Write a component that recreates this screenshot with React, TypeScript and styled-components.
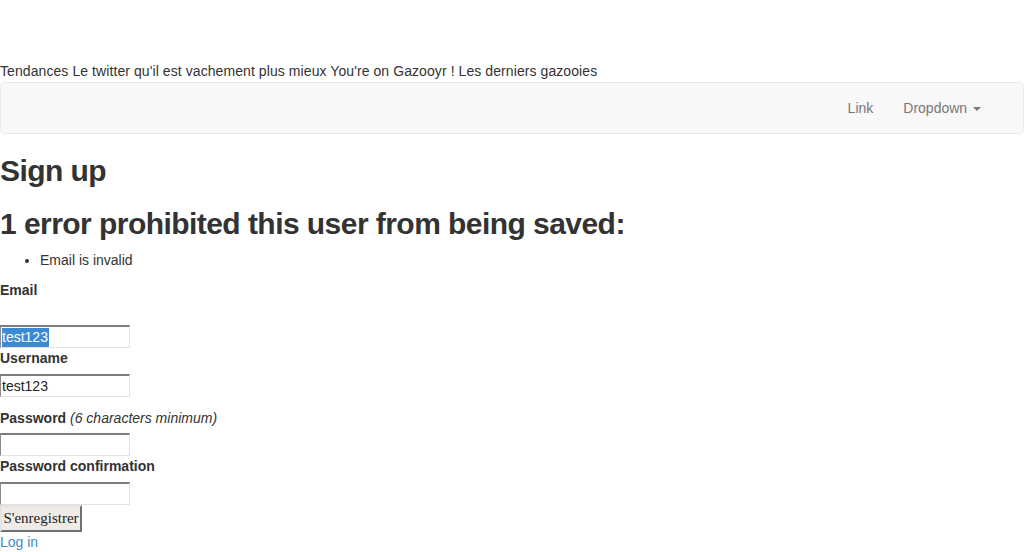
import React from "react";
import styled, { createGlobalStyle } from "styled-components";

const GlobalStyle = createGlobalStyle`
  html, body {
    margin: 0;
    padding: 0;
    background: #ffffff;
  }
  body {
    font-family: "Liberation Sans", Arial, Helvetica, sans-serif;
    font-size: 14px;
    line-height: 20px;
    color: #333333;
  }
  * { box-sizing: border-box; }
`;

const Page = styled.div`
  padding-top: 61px;
`;

const TopLine = styled.div`
  white-space: nowrap;
  letter-spacing: 0.08px;
`;

const Navbar = styled.nav`
  margin: 1px 0 20px;
  min-height: 52px;
  border: 1px solid #e7e7e7;
  border-radius: 4px;
  background: #f8f8f8;
  display: flex;
  justify-content: flex-end;
  padding-right: 27px;
`;

const NavList = styled.ul`
  display: flex;
  list-style: none;
  margin: 0;
  padding: 0;
`;

const NavLink = styled.a`
  display: block;
  padding: 15px;
  line-height: 20px;
  color: #777777;
  text-decoration: none;
`;

const Caret = styled.span`
  display: inline-block;
  width: 0;
  height: 0;
  margin-left: 2px;
  vertical-align: middle;
  border-top: 4px solid #777777;
  border-left: 4px solid transparent;
  border-right: 4px solid transparent;
`;

const Heading = styled.h2`
  font-size: 30px;
  font-weight: bold;
  letter-spacing: -0.55px;
  line-height: 33px;
  margin: 20px 0 10px;
  color: #333333;
`;

const ErrorList = styled.ul`
  margin: 0 0 10px;
  padding-left: 40px;
`;

const Label = styled.label<{ $mb: number }>`
  display: block;
  font-weight: bold;
  margin-bottom: ${(p) => p.$mb}px;
  white-space: nowrap;
`;

const Hint = styled.em`
  font-weight: normal;
  font-style: italic;
`;

const inputBox = `
  display: block;
  width: 130px;
  height: 23px;
  padding: 0 1px;
  border-top: 2px solid #7d7d7d;
  border-left: 1px solid #8a8a8a;
  border-right: 1px solid #e2e2e2;
  border-bottom: 1px solid #e2e2e2;
  background: #ffffff;
  font-family: "Liberation Sans", Arial, sans-serif;
  font-size: 14px;
  line-height: 20px;
  color: #222222;
  outline: none;
  border-radius: 0;
`;

const Input = styled.input<{ $mb: number }>`
  ${inputBox}
  margin: 0 0 ${(p) => p.$mb}px;
`;

const FakeInput = styled.div<{ $mb: number }>`
  ${inputBox}
  margin: 0 0 ${(p) => p.$mb}px;
  white-space: nowrap;
  overflow: hidden;
`;

const Selected = styled.span`
  display: inline-block;
  background: #3d8ad4;
  color: #ffffff;
  line-height: 19px;
  padding: 0 1px 0 0;
`;

const SubmitButton = styled.button`
  display: block;
  height: 27px;
  width: 82px;
  padding: 0;
  margin: 0;
  font-family: "Liberation Serif", "Times New Roman", serif;
  font-size: 15px;
  color: #222222;
  background: #efebe6;
  border: 2px solid;
  border-color: #e4e4e4 #707070 #707070 #e4e4e4;
  border-radius: 0;
`;

const LoginLink = styled.a`
  display: block;
  color: #428bca;
  text-decoration: none;
`;

export default function App() {
  return (
    <Page>
      <GlobalStyle />
      <TopLine>
        Tendances Le twitter qu'il est vachement plus mieux You're on Gazooyr ! Les derniers gazooies
      </TopLine>
      <Navbar>
        <NavList>
          <li>
            <NavLink href="#">Link</NavLink>
          </li>
          <li>
            <NavLink href="#">
              Dropdown <Caret />
            </NavLink>
          </li>
        </NavList>
      </Navbar>
      <Heading>Sign up</Heading>
      <Heading>1 error prohibited this user from being saved:</Heading>
      <ErrorList>
        <li>Email is invalid</li>
      </ErrorList>
      <form onSubmit={(e) => e.preventDefault()}>
        <Label $mb={25}>Email</Label>
        <FakeInput $mb={0}>
          <Selected>test123</Selected>
        </FakeInput>
        <Label $mb={6}>Username</Label>
        <Input $mb={11} defaultValue="test123" />
        <Label $mb={5}>
          Password <Hint>(6 characters minimum)</Hint>
        </Label>
        <Input $mb={0} type="password" />
        <Label $mb={6}>Password confirmation</Label>
        <Input $mb={0} type="password" />
        <SubmitButton type="submit">S'enregistrer</SubmitButton>
      </form>
      <LoginLink href="#">Log in</LoginLink>
    </Page>
  );
}
